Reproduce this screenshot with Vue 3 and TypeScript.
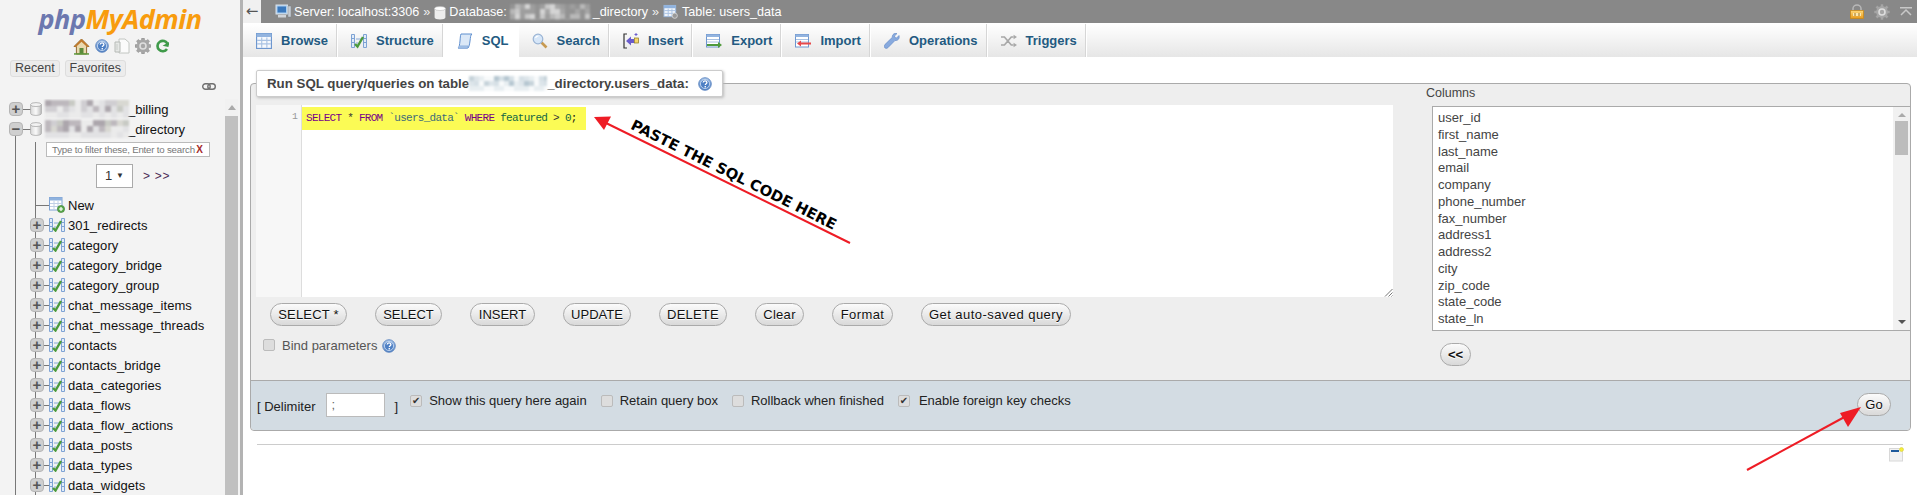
<script setup lang="ts">
import { h } from 'vue'

const tables = ['301_redirects','category','category_bridge','category_group','chat_message_items','chat_message_threads','contacts','contacts_bridge','data_categories','data_flows','data_flow_actions','data_posts','data_types','data_widgets']
const columns = ['user_id','first_name','last_name','email','company','phone_number','fax_number','address1','address2','city','zip_code','state_code','state_ln','country_code']
const tabs = [
  { label: 'Browse', icon: 'i-browse' },
  { label: 'Structure', icon: 'i-struct' },
  { label: 'SQL', icon: 'i-sql', active: true },
  { label: 'Search', icon: 'i-search' },
  { label: 'Insert', icon: 'i-insert' },
  { label: 'Export', icon: 'i-export' },
  { label: 'Import', icon: 'i-import' },
  { label: 'Operations', icon: 'i-wrench' },
  { label: 'Triggers', icon: 'i-trigger' },
]
const sqlButtons = [
  { label: 'SELECT *', width: 77, spacing: 0.2 },
  { label: 'SELECT', width: 67, spacing: 0 },
  { label: 'INSERT', width: 65, spacing: 0 },
  { label: 'UPDATE', width: 68, spacing: 0 },
  { label: 'DELETE', width: 68, spacing: 0.2 },
  { label: 'Clear', width: 49, spacing: 0.3 },
  { label: 'Format', width: 61, spacing: 0.4 },
  { label: 'Get auto-saved query', width: 150, spacing: 0.45 },
]

// Pixelated stand-in for the redacted database name in the screenshot.
const Mosaic = (p: { w: number; h: number; seed: number; tones: string[]; cell?: number }) => {
  const cell = p.cell ?? 6
  const rects = []
  let s = p.seed
  for (let y = 0; y < p.h; y += cell) {
    for (let x = 0; x < p.w; x += cell) {
      s = (s * 7919 + 131) % 1009
      const inEdge = y >= p.h - cell
      const tone = inEdge ? p.tones[s % 2] : p.tones[s % p.tones.length]
      rects.push(h('rect', { x, y, width: cell, height: cell, fill: tone }))
    }
  }
  return h('svg', { class: 'mosaic', width: p.w, height: p.h }, rects)
}
const sideTones = ['#ebebeb', '#e2e2e4', '#d0ced2', '#bdb8bd', '#aca6ac', '#d8d8d2', '#c8cac4']
const headTones = ['#939393', '#a6a6a6', '#b8b8b8', '#c8c8c8', '#d4d4d4', '#9e9e9e']
const legTones = ['#f8fafb', '#e8eef1', '#d6e0e6', '#c6d3da', '#b6c7d1', '#dde5ea']
</script>

<template>
  <svg class="defs" aria-hidden="true">
    <defs>
      <linearGradient id="gBlue" x1="0" y1="0" x2="0" y2="1"><stop offset="0" stop-color="#a9c6ea"/><stop offset="1" stop-color="#4f7fc0"/></linearGradient>
      <linearGradient id="gDb" x1="0" y1="0" x2="1" y2="0"><stop offset="0" stop-color="#d8d8d8"/><stop offset=".5" stop-color="#fafafa"/><stop offset="1" stop-color="#bdbdbd"/></linearGradient>
      <linearGradient id="gLock" x1="0" y1="0" x2="0" y2="1"><stop offset="0" stop-color="#ffd877"/><stop offset="1" stop-color="#e89a1c"/></linearGradient>
    </defs>
    <symbol id="i-home" viewBox="0 0 17 17">
      <path d="M8.500 1 1 8.500h2.400V16h10.200V8.500H16z" fill="#e9d9b0" stroke="#8d6b35"/>
      <path d="M8.500 1 1 8.500l1.600.8 5.900-5.500 5.900 5.500 1.600-.8z" fill="#c0782c"/>
      <rect x="6.500" y="10" width="4" height="6" fill="#5b8a3a"/>
      <rect x="1" y="15.200" width="15" height="1.500" fill="#5e9a3c"/>
    </symbol>
    <symbol id="i-help" viewBox="0 0 16 16">
      <circle cx="8" cy="8" r="7.200" fill="url(#gBlue)" stroke="#5c85c0"/>
      <circle cx="8" cy="8" r="5.200" fill="#4d7fc4" stroke="#d4e2f5" stroke-width=".9"/>
      <path d="M5.900 6.300c.2-1.300 1.100-1.900 2.200-1.900 1.200 0 2.100.7 2.100 1.800 0 1.500-1.900 1.500-1.900 3" fill="none" stroke="#fff" stroke-width="1.500"/>
      <rect x="7.500" y="10.300" width="1.600" height="1.600" fill="#fff"/>
    </symbol>
    <symbol id="i-docs" viewBox="0 0 16 16">
      <path d="M5 1h6l4 3.500V15H5z" fill="#fbfbfb" stroke="#c2c6c2"/>
      <path d="M1 4h5v10H1z" fill="#e6e8e6" stroke="#b6bab6"/>
      <path d="M3 6v6" stroke="#c8ccc8"/>
    </symbol>
    <symbol id="i-gear" viewBox="0 0 16 16">
      <path d="M6.800 0h2.400l.4 2.200 1.400.6L12.800 1.500l1.700 1.700-1.300 1.800.6 1.400 2.200.4v2.400l-2.200.4-.6 1.400 1.300 1.800-1.700 1.700-1.800-1.300-1.400.6-.4 2.200H6.800l-.4-2.200-1.400-.6-1.800 1.300-1.700-1.700 1.300-1.800-.6-1.400L0 9.200V6.800l2.200-.4.600-1.400L1.500 3.200l1.700-1.700 1.800 1.300 1.400-.6z" fill="#a6a6a6" stroke="#8a8a8a" stroke-width=".5"/>
      <circle cx="8" cy="8" r="3" fill="none" stroke="#dedede" stroke-width="1.600"/>
    </symbol>
    <symbol id="i-reload" viewBox="0 0 13 14">
      <path d="M11.500 5A5.200 5.200 0 1 0 11 10" fill="none" stroke="#3f9a4a" stroke-width="2.600"/>
      <path d="M7 7.500h6V2z" fill="#3f9a4a" transform="rotate(12 10 5)"/>
    </symbol>
    <symbol id="i-link" viewBox="0 0 14 7">
      <rect x=".7" y=".7" width="7.500" height="5.600" rx="2.800" fill="none" stroke="#6f6f6f" stroke-width="1.400"/>
      <rect x="5.800" y=".7" width="7.500" height="5.600" rx="2.800" fill="none" stroke="#6f6f6f" stroke-width="1.400"/>
    </symbol>
    <symbol id="i-db" viewBox="0 0 12 14">
      <path d="M.6 2.600v8.800C.6 12.600 3 13.400 6 13.400s5.400-.8 5.400-2V2.600z" fill="url(#gDb)" stroke="#aaa" stroke-width=".8"/>
      <ellipse cx="6" cy="2.600" rx="5.400" ry="2" fill="#f2f2f2" stroke="#aaa" stroke-width=".8"/>
    </symbol>
    <symbol id="i-struct" viewBox="0 0 16 14">
      <path d="M.5.500h3v13h-3zM12.500.500h3v13h-3z" fill="#e2ecf8" stroke="#7ea3d4"/>
      <path d="M5 5h6M5 9h2" stroke="#8aaad6"/>
      <path d="M.5 4.500h3M.5 8.500h3M12.500 4.500h3M12.500 8.500h3" stroke="#7ea3d4"/>
      <path d="m4 10 2.500 2.500L12 3" fill="none" stroke="#4c9a3c" stroke-width="2.400"/>
    </symbol>
    <symbol id="i-new" viewBox="0 0 16 16">
      <rect x=".5" y=".5" width="12.500" height="12.500" fill="#fff" stroke="#7ea3d4"/>
      <rect x=".5" y=".5" width="12.500" height="3" fill="#8fb2de"/>
      <path d="M1 6.500h12M1 9.500h12M5 4v9M9 4v9" stroke="#c0cfe6"/>
      <circle cx="12" cy="12" r="3.600" fill="#59a84a" stroke="#3c7d34" stroke-width=".6"/>
      <path d="M12 10v4M10 12h4" stroke="#fff" stroke-width="1.200"/>
    </symbol>
    <symbol id="i-browse" viewBox="0 0 14 14">
      <rect x=".5" y=".5" width="13" height="13" fill="#f6f9fd" stroke="#6e97cf"/>
      <rect x=".5" y=".5" width="13" height="3" fill="#93b4df"/>
      <path d="M1 6.500h12M1 9.500h12M5 4v9M9.500 4v9" stroke="#a9c2e3"/>
    </symbol>
    <symbol id="i-sql" viewBox="0 0 16 16">
      <path d="M4 1h11c-1.600 1-1.400 3-2 7-.4 3-.8 5.500-2 7H1c1.400-1 1.500-3 2-7 .3-3 .3-5.500 1-7z" fill="#dbe8f7" stroke="#5f8fcf"/>
      <path d="M1 15h9c1 0 1.300-1 1.200-2H2" fill="#b8d0ee" stroke="#5f8fcf" stroke-width=".6"/>
    </symbol>
    <symbol id="i-search" viewBox="0 0 16 16">
      <path d="m9.500 9.500 5 5" stroke="#c79a52" stroke-width="2.600"/>
      <circle cx="6" cy="6" r="4.800" fill="#d6e6f8" stroke="#9ab4d4" stroke-width="1.200"/>
      <path d="M3.500 5c.5-1.500 1.500-2 3-2" fill="none" stroke="#fff" stroke-width="1.200"/>
    </symbol>
    <symbol id="i-insert" viewBox="0 0 16 16">
      <path d="M4 1H1v14h3" fill="none" stroke="#333" stroke-width="1.200"/>
      <path d="M3 8 8 3.500V6h3v4H8v2.500z" fill="#6a5ccc"/>
      <rect x="11.500" y="5" width="4" height="5" fill="#f5d76b" stroke="#8a7420" stroke-width=".7"/>
      <path d="M13 0v3M11.500 1.500h3" stroke="#6a5ccc"/>
    </symbol>
    <symbol id="i-export" viewBox="0 0 16 14">
      <rect x=".5" y=".5" width="13" height="12.500" fill="#fff" stroke="#6e97cf"/>
      <rect x=".5" y=".5" width="13" height="2.500" fill="#93b4df"/>
      <path d="M1 5.500h12M1 8h12" stroke="#a9c2e3"/>
      <path d="M1 10h11V8l4 3-4 3v-2H1z" fill="#4f9a3c"/>
    </symbol>
    <symbol id="i-import" viewBox="0 0 16 14">
      <rect x=".5" y=".5" width="13" height="12.500" fill="#fff" stroke="#6e97cf"/>
      <rect x=".5" y=".5" width="13" height="2.500" fill="#93b4df"/>
      <path d="M1 5.500h12M1 8h12" stroke="#a9c2e3"/>
      <path d="M16 8.500H6V6.500L2 9.500l4 3v-2h10z" fill="#e8484a"/>
    </symbol>
    <symbol id="i-wrench" viewBox="0 0 16 16">
      <path d="M15 2.500 12.500 5 11 4.500l-.5-1.500L13 .6C10.500-.3 8 1.500 8.300 4.300L.9 11.600c-1 1-.9 2.400-.1 3.200.9.800 2.200.8 3.100-.1L11 7.500c2.800.5 5-2 4-5z" fill="#88aade" stroke="#5f86c4" stroke-width=".6"/>
    </symbol>
    <symbol id="i-trigger" viewBox="0 0 14 12">
      <path d="M0 2.500h3l6 7h2M0 9.500h3l6-7h2" fill="none" stroke="#a8a8a8" stroke-width="1.500"/>
      <path d="m11 .5 3 2-3 2zM11 7.500l3 2-3 2z" fill="#a8a8a8"/>
    </symbol>
    <symbol id="i-server" viewBox="0 0 16 15">
      <rect x="1" y="1" width="11.500" height="9" fill="#a8cdf0" stroke="#d8e0e8"/>
      <rect x="2.500" y="2.500" width="8.500" height="6" fill="#3a78bc"/>
      <rect x="3" y="11" width="8" height="2.500" fill="#d0d4d8"/>
      <rect x="13" y="2" width="3" height="11" fill="#c6ccd2" stroke="#6e7a86" stroke-width=".4"/>
    </symbol>
    <symbol id="i-dbhead" viewBox="0 0 12 14">
      <path d="M.6 2.600v8.800C.6 12.600 3 13.400 6 13.400s5.400-.8 5.400-2V2.600z" fill="#ededed"/>
      <ellipse cx="6" cy="2.600" rx="5.400" ry="2" fill="#fff" stroke="#bbb" stroke-width=".6"/>
    </symbol>
    <symbol id="i-tablecfg" viewBox="0 0 16 16">
      <rect x=".5" y="1.500" width="12.500" height="12" fill="#f0f5fb" stroke="#9ab8dd"/>
      <rect x=".5" y="1.500" width="12.500" height="3" fill="#8fb2de"/>
      <path d="M1 7h12M1 10h12M5 5v8M9 5v8" stroke="#a9c2e3"/>
      <circle cx="12" cy="12.500" r="2.800" fill="#999" stroke="#ddd" stroke-width=".8"/>
    </symbol>
    <symbol id="i-lock" viewBox="0 0 14 15">
      <path d="M3 7V4.500C3 2.500 4.800 1 7 1s4 1.500 4 3.500V7" fill="none" stroke="#b8b8b8" stroke-width="1.500"/>
      <rect x=".5" y="6.500" width="13" height="8" fill="url(#gLock)" stroke="#c98a1c" stroke-width=".8"/>
      <rect x="3" y="9" width="8" height="3" fill="#fbe8b0"/>
      <path d="M5 9v3M9 9v3" stroke="#a07018"/>
    </symbol>
    <symbol id="i-console" viewBox="0 0 15 15">
      <rect x=".5" y="1.500" width="13" height="12.500" fill="#f2f2f2" stroke="#d8d8d8"/>
      <rect x="2" y="3" width="8" height="2" fill="#1f5a9c"/>
      <circle cx="12.500" cy="2.500" r="2" fill="#f5ee3a" stroke="#d8d040" stroke-width=".6"/>
    </symbol>
  </svg>

  <div class="page">
    <aside class="side">
      <div class="brand">
        <div class="logo"><span class="php">php</span><span class="my">MyAdmin</span></div>
        <div class="side-icons">
          <svg class="ic17"><use href="#i-home"/></svg>
          <svg class="ic14"><use href="#i-help"/></svg>
          <svg class="ic16"><use href="#i-docs"/></svg>
          <svg class="ic16"><use href="#i-gear"/></svg>
          <svg class="ic13"><use href="#i-reload"/></svg>
        </div>
        <div class="side-tabs"><span class="chip">Recent</span><span class="chip">Favorites</span></div>
        <div class="link-row"><svg class="ic-link"><use href="#i-link"/></svg></div>
      </div>
      <div class="tree-wrap">
        <div class="tree">
          <div class="db-row"><span class="exp">+</span><svg class="ic-db"><use href="#i-db"/></svg><Mosaic :w="84" :h="18" :seed="11" :tones="sideTones"/><span class="suffix">_billing</span></div>
          <div class="db-row"><span class="exp">−</span><svg class="ic-db"><use href="#i-db"/></svg><Mosaic :w="84" :h="18" :seed="47" :tones="sideTones"/><span class="suffix">_directory</span></div>
          <div class="db-body">
            <div class="filter"><span class="filter-text">Type to filter these, Enter to search</span><b class="filter-x">X</b></div>
            <div class="pager">
              <span class="pick"><span>1</span><i class="caret">▼</i></span>
              <span class="pager-links">&gt; &gt;&gt;</span>
            </div>
            <div class="row new-row"><svg class="ic-new"><use href="#i-new"/></svg><span>New</span></div>
            <div v-for="t in tables" :key="t" class="row">
              <span class="exp">+</span><svg class="ic-struct"><use href="#i-struct"/></svg><span class="tname">{{ t }}</span>
            </div>
          </div>
        </div>
        <div class="side-scroll"><i class="up"></i><i class="thumb"></i></div>
      </div>
    </aside>
    <div class="handle"></div>

    <main class="main">
      <header class="top">
        <span class="back">←</span>
        <div class="crumbs">
          <svg class="ic-head"><use href="#i-server"/></svg><span>Server: localhost:3306</span><span class="sep">»</span>
          <svg class="ic-headdb"><use href="#i-dbhead"/></svg><span>Database:</span><Mosaic :w="80" :h="16" :seed="23" :cell="5" :tones="headTones"/><span>_directory</span><span class="sep">»</span>
          <svg class="ic-head"><use href="#i-tablecfg"/></svg><span>Table: users_data</span>
        </div>
        <div class="top-right">
          <svg class="ic-lock"><use href="#i-lock"/></svg>
          <svg class="ic-topgear"><use href="#i-gear"/></svg>
          <svg class="ic-collapse" viewBox="0 0 12 9"><path d="M0 .7h12M1 8l5-5 5 5" fill="none" stroke="#c8c8c8" stroke-width="1.500"/></svg>
        </div>
      </header>

      <nav class="tabs">
        <a v-for="t in tabs" :key="t.label" class="tab" :class="{ active: t.active }">
          <svg class="ic-tab"><use :href="'#' + t.icon"/></svg><span>{{ t.label }}</span>
        </a>
      </nav>

      <div class="content">
        <section class="fieldset">
          <div class="legend">
            <span>Run SQL query/queries on table</span><Mosaic :w="78" :h="15" :seed="5" :cell="5" :tones="legTones"/><span>_directory.users_data:</span>
            <svg class="ic14 leg-help"><use href="#i-help"/></svg>
          </div>
          <div class="query">
            <div class="left">
              <div class="editor">
                <div class="gutter">1</div>
                <div class="code">
                  <div class="line"><span class="kw">SELECT</span> <span class="op">*</span> <span class="kw">FROM</span> <span class="str">`users_data`</span> <span class="kw">WHERE</span> <span class="id">featured</span> <span class="op">&gt;</span> <span class="num">0</span>;</div>
                  <svg class="grip" viewBox="0 0 9 9"><path d="M8.500 1 1 8.500M8.500 4.500l-4 4M8.500 7.500l-1 1" stroke="#777" fill="none"/></svg>
                </div>
              </div>
              <div class="sql-btns">
                <button v-for="b in sqlButtons" :key="b.label" class="btn" :style="{ width: b.width + 'px', letterSpacing: b.spacing + 'px' }">{{ b.label }}</button>
              </div>
              <label class="bind"><i class="cb"></i><span>Bind parameters</span><svg class="ic14 bind-help"><use href="#i-help"/></svg></label>
            </div>
            <div class="right">
              <div class="col-label">Columns</div>
              <div class="list-box">
                <div class="list"><div v-for="c in columns" :key="c">{{ c }}</div></div>
                <div class="list-bar"><i class="tri-up"></i><i class="list-thumb"></i><i class="tri-down"></i></div>
              </div>
              <button class="btn back-btn">&lt;&lt;</button>
            </div>
          </div>
          <div class="foot">
            <span>[ Delimiter</span>
            <span class="delim">;</span>
            <span class="bracket">]</span>
            <label class="opt first"><i class="cb on">✔</i><span>Show this query here again</span></label>
            <label class="opt"><i class="cb"></i><span>Retain query box</span></label>
            <label class="opt"><i class="cb"></i><span>Rollback when finished</span></label>
            <label class="opt last"><i class="cb on">✔</i><span>Enable foreign key checks</span></label>
            <button class="btn go">Go</button>
          </div>
        </section>
        <hr class="rule" />
        <div class="console-row"><svg class="ic-console"><use href="#i-console"/></svg></div>
      </div>
    </main>

    <svg class="notes" width="1917" height="495" viewBox="0 0 1917 495">
      <g stroke="#ee1c25" stroke-width="2" fill="#ee1c25">
        <path d="M850 243 606 123" fill="none"/>
        <path d="M594 117l17-.5-7 13.500z" stroke="none"/>
        <path d="M1747 470 1850 414" fill="none"/>
        <path d="M1861 407l-21 6 8 14z" stroke="none"/>
      </g>
    </svg>
    <div class="note-text">PASTE THE SQL CODE HERE</div>
  </div>
</template>

<style>
body { margin: 0; background: #fff; overflow: hidden; }
svg.mosaic { display: inline-block; flex: none; filter: blur(.8px); }
</style>

<style scoped>
.defs { position: absolute; width: 0; height: 0; }
.page { position: relative; display: flex; width: 1917px; height: 495px; overflow: hidden; font: 13px "Liberation Sans", Arial, sans-serif; color: #444; background: #fff; }

.side { width: 240px; flex: none; background: #f3f3f3; display: flex; flex-direction: column; }
.brand { height: 99px; flex: none; display: flex; flex-direction: column; align-items: center; box-sizing: border-box; }
.logo { height: 37px; font: italic bold 27px/37px "Open Sans", "Liberation Sans", sans-serif; letter-spacing: -.5px; }
.php { color: #6c78af; }
.my { color: #f89c0e; }
.side-icons { display: flex; align-items: center; gap: 5px; height: 18px; margin-left: 1px; }
.ic17 { width: 17px; height: 17px; }
.ic16 { width: 16px; height: 16px; }
.ic14 { width: 14px; height: 14px; }
.ic13 { width: 13px; height: 14px; }
.side-tabs { align-self: flex-start; display: flex; gap: 5px; margin: 5px 0 0 10px; }
.chip { height: 15px; line-height: 15px; padding: 0 4px; border: 1px solid #ddd; border-radius: 3px; background: #ececec; color: #444; font-size: 12.5px; }
.link-row { align-self: flex-end; margin: 6px 24px 0 0; height: 8px; display: flex; }
.ic-link { width: 14px; height: 7px; }

.tree-wrap { flex: 1; display: flex; min-height: 0; }
.tree { flex: 1; min-width: 0; overflow: hidden; padding-left: 9px; color: #111; background: linear-gradient(#777, #777) no-repeat 15px 37px / 1px 100%; }
.db-row { height: 20px; display: flex; align-items: center; background: linear-gradient(#777, #777) no-repeat 0 50% / 22px 1px; }
.exp { width: 14px; height: 14px; flex: none; box-sizing: border-box; border: 1px solid #b5b5b5; border-radius: 4px; background: #cfcfcf; color: #555; font: bold 15px/11px "Liberation Sans", sans-serif; text-align: center; }
.ic-db { width: 12px; height: 14px; margin: 0 3px 0 7px; flex: none; }
.suffix { margin-left: -1px; }
.db-body { margin-left: -9px; padding-left: 26px; background: linear-gradient(#777, #777) no-repeat 35px 0 / 1px 100%; height: 400px; }
.filter { width: 164px; height: 15px; margin: 3px 0 0 20px; box-sizing: border-box; border: 1px solid #bbb; background: #fff; display: flex; align-items: center; justify-content: space-between; padding: 0 6px 0 5px; }
.filter-text { font-size: 9.7px; color: #777; white-space: nowrap; letter-spacing: -.2px; }
.filter-x { color: #a52a2a; font-size: 10px; }
.pager { display: flex; align-items: center; margin: 6px 0 0 70px; height: 25px; }
.pick { width: 37px; height: 24px; box-sizing: border-box; border: 1px solid #aaa; background: #fff; display: flex; align-items: center; justify-content: space-between; padding: 0 8px; font-size: 13px; color: #333; }
.caret { font-style: normal; font-size: 8px; color: #333; }
.pager-links { margin-left: 10px; font-size: 12px; color: #4a2a55; letter-spacing: .7px; }
.row { height: 20px; display: flex; align-items: center; gap: 3px; padding-left: 4px; white-space: nowrap; background: linear-gradient(#777, #777) no-repeat 9px 50% / 14px 1px; }
.row .exp { margin-right: 2px; }
.tname { letter-spacing: .06px; }
.new-row { margin-top: 7px; padding-left: 23px; }
.ic-new { width: 16px; height: 16px; flex: none; }
.ic-struct { width: 16px; height: 14px; flex: none; }
.side-scroll { width: 13px; flex: none; margin-right: 2px; background: #f1f1f1; display: flex; flex-direction: column; align-items: center; }
.up { width: 0; height: 0; margin-top: 6px; border: 4px solid transparent; border-top: 0; border-bottom: 5px solid #aaa; }
.thumb { flex: 1; width: 13px; margin-top: 6px; background: #c0c0c0; }
.handle { width: 3px; flex: none; background: #b3b3b3; }

.main { flex: 1; min-width: 0; display: flex; flex-direction: column; }
.top { height: 23px; flex: none; background: #888; color: #fff; display: flex; align-items: center; }
.back { width: 18px; height: 23px; background: #f0f0f0; color: #555; font: 15px/22px "DejaVu Sans", sans-serif; text-align: center; flex: none; }
.crumbs { display: flex; align-items: center; gap: 3px; margin-left: 14px; white-space: nowrap; color: #fff; font-size: 12.6px; }
.ic-head { width: 16px; height: 15px; flex: none; }
.ic-headdb { width: 12px; height: 14px; flex: none; margin-top: 2px; }
.sep { margin: 0 1px; color: #eee; }
.top-right { margin-left: auto; display: flex; align-items: center; gap: 10px; padding-right: 5px; }
.ic-lock { width: 14px; height: 15px; }
.ic-topgear { width: 16px; height: 16px; }
.ic-collapse { width: 12px; height: 9px; }

.tabs { height: 33px; margin-top: 1px; flex: none; display: flex; background: linear-gradient(#fff, #e6e6e6); box-sizing: border-box; }
.tab { display: flex; align-items: center; gap: 9px; padding: 0 9px 0 13px; border-right: 1px solid #fff; box-shadow: inset -1px 0 0 #d6d6d6; font-weight: bold; color: #235a81; }
.tab.active { background: #fff; box-shadow: none; }
.ic-tab { width: 16px; height: 16px; flex: none; }

.content { flex: 1; padding: 26px 6px 0 7px; display: flex; flex-direction: column; min-height: 0; }
.fieldset { position: relative; height: 348px; flex: none; box-sizing: border-box; border: 1px solid #aaa; border-radius: 4px; background: #eee; display: flex; flex-direction: column; }
.legend { position: absolute; left: 5px; top: -14px; height: 27px; box-sizing: border-box; padding: 0 10px; display: flex; align-items: center; background: #fff; border: 1px solid #ccc; box-shadow: 1px 1px 3px #bbb; font-weight: bold; font-size: 13.3px; color: #444; white-space: nowrap; border-radius: 2px; }
.leg-help { margin-left: 9px; }

.query { flex: 1; display: flex; min-height: 0; }
.left { width: 1158px; flex: none; padding: 21px 0 0 5px; box-sizing: border-box; }
.editor { width: 1137px; height: 192px; display: flex; background: #fff; }
.gutter { width: 46px; flex: none; box-sizing: border-box; background: #f7f7f7; border-right: 1px solid #ddd; text-align: right; padding: 3px 3px 0 0; font: 9.8px/18px "Liberation Mono", monospace; color: #999; }
.code { flex: 1; position: relative; padding-top: 2px; font: 11px/23px "Liberation Mono", monospace; letter-spacing: -.72px; color: #111; }
.line { width: 284px; height: 23px; background: #fbfb55; padding-left: 4px; box-sizing: border-box; white-space: pre; }
.kw { color: #708; }
.str { color: #3c6a7a; }
.id { color: #164; }
.op { color: #333; }
.num { color: #164; }
.grip { position: absolute; right: 0; bottom: 0; width: 9px; height: 9px; }
.sql-btns { display: flex; gap: 28px; padding: 6px 0 0 14px; }
.btn { height: 23px; padding: 0; box-sizing: border-box; border: 1px solid #aaa; border-radius: 12px; background: linear-gradient(#fbfbfb, #d9d9d9); color: #111; font: 13px "Liberation Sans", sans-serif; text-shadow: 0 1px 0 #fff; white-space: nowrap; flex: none; }
.bind { display: flex; align-items: center; margin: 9px 0 0 7px; height: 20px; color: #555; }
.cb { width: 12px; height: 12px; flex: none; box-sizing: border-box; border: 1px solid #bbb; border-radius: 2px; background: #ddd; font: normal 10px/10px "DejaVu Sans", sans-serif; color: #333; text-align: center; display: inline-block; }
.bind .cb { margin-right: 7px; }
.bind-help { margin-left: 5px; margin-top: 2px; }

.right { flex: 1; min-width: 0; padding-top: 2px; }
.col-label { margin-left: 17px; height: 20px; line-height: 15px; font-size: 12.5px; }
.list-box { margin-left: 23px; height: 225px; box-sizing: border-box; border: 1px solid #aaa; border-right: 0; display: flex; background: #fff; }
.list { flex: 1; overflow: hidden; padding: 3px 5px 0; color: #444; line-height: 16.75px; }
.list-bar { width: 17px; flex: none; background: #f1f1f1; display: flex; flex-direction: column; align-items: center; }
.tri-up { width: 0; height: 0; margin-top: 6px; border: 4px solid transparent; border-top: 0; border-bottom: 4px solid #aaa; }
.list-thumb { width: 13px; height: 34px; margin-top: 4px; background: #bcbcbc; }
.tri-down { width: 0; height: 0; margin-top: auto; margin-bottom: 6px; border: 4px solid transparent; border-bottom: 0; border-top: 4px solid #555; }
.back-btn { display: block; margin: 12px 0 0 31px; width: 31px; font-weight: bold; }

.foot { height: 50px; flex: none; box-sizing: border-box; border-top: 1px solid #aaa; border-radius: 0 0 4px 4px; background: #d3dce3; display: flex; align-items: flex-start; padding: 12px 19px 0 6px; color: #222; white-space: nowrap; }
.foot > span:first-child { margin-top: 6px; }
.delim { width: 59px; height: 24px; margin: 0 0 0 10px; box-sizing: border-box; border: 1px solid #bbb; background: #fff; padding: 4px 5px; color: #666; line-height: 14px; }
.bracket { margin: 6px 0 0 10px; }
.opt { display: flex; align-items: center; gap: 7px; margin-left: 14px; height: 15px; }
.opt.first { margin-left: 12px; }
.opt.last { gap: 9px; }
.go { margin-left: auto; width: 34px; }

.rule { margin: 13px 7px 0 7px; border: 0; border-top: 1px solid #ccc; width: 1646px; }
.console-row { display: flex; justify-content: flex-end; padding: 2px 7px 0 0; }
.ic-console { width: 15px; height: 15px; }

.notes { position: absolute; left: 0; top: 0; pointer-events: none; }
.note-text { position: absolute; left: 632px; top: 116px; transform: rotate(26.5deg); transform-origin: 0 50%; font: bold 14.8px/16px "DejaVu Sans", sans-serif; color: #000; white-space: nowrap; }
</style>
